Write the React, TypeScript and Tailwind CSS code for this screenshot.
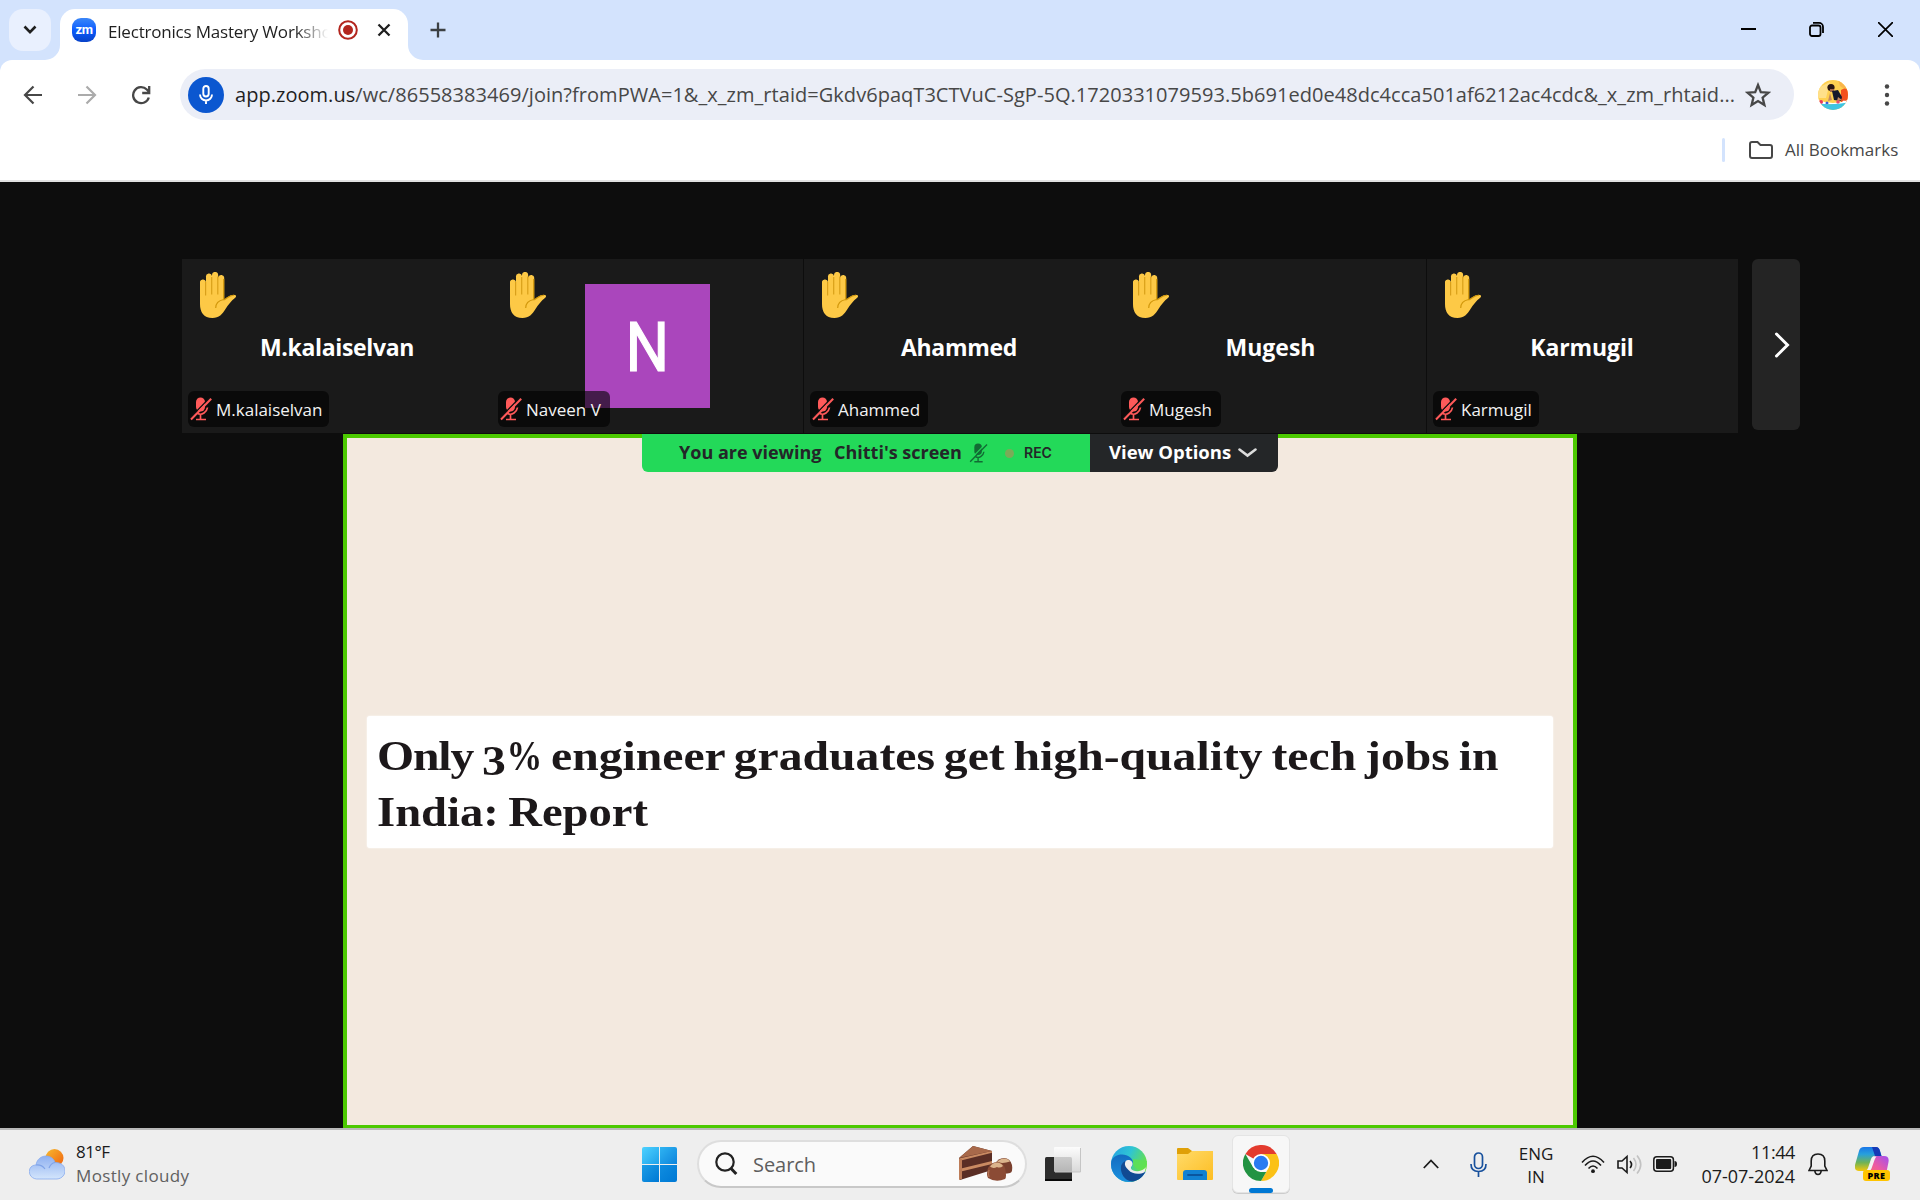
import React from "react";

const sans = "font-['Open_Sans',sans-serif]";

function Hand() {
  return (
    <svg width="37" height="47" viewBox="0 0 37 47" className="absolute left-[18px] top-[13px]">
      <path
        d="M0 11a3 3 0 0 1 6-1V5a3 3 0 0 1 6-1V3a3 3 0 0 1 6.200 0V5.500a3 3 0 0 1 6 1V27.500c2.500-.8 4-4.500 10-4.500 2 0 2.500 1.500 1 2.700C31 29 28 33 25.500 37c-3 5-6.500 9-13 9C3.500 46 0 40 0 32z"
        fill="#fdc946"
      />
      <path d="M5.600 10V23.500M11.700 5V22.500M17.800 4.500V22.500" fill="none" stroke="#d9a01a" strokeWidth="1.200" />
      <path d="M23.700 7V27.500c-5 1-8 4-8 8.500M23.700 28c3.500-1.500 4.500-4.500 10.500-5" fill="none" stroke="#d2980c" strokeWidth="1.200" />
    </svg>
  );
}

function MutedMic({ color, gap, w, h, line = 2 }: { color: string; gap: string; w: number; h: number; line?: number }) {
  return (
    <svg width={w} height={h} viewBox="0 0 22 24" className="shrink-0">
      <rect x="6" y="0.500" width="9" height="14" rx="4.500" fill={color} />
      <path d="M7 16q3.500 2.500 7 0 3-2 3.500-5.500M10.500 17.500v4.500M6 22.500h10" fill="none" stroke={color} strokeWidth="1.700" />
      <path d="M-.2 21.200 20 .5" stroke={gap} strokeWidth="1.300" />
      <path d="M1 22.500 21.200 1.800" stroke={color} strokeWidth={line} />
    </svg>
  );
}

type Person = { name: string; big: string; label: string; tile: string; picture?: boolean };

const people: Person[] = [
  { name: "M.kalaiselvan", big: "pl-px tracking-[-0.35px]", label: "w-[141px]", tile: "w-[310px] border-transparent" },
  { name: "Naveen V", big: "", label: "w-[112px]", picture: true, tile: "w-[312px] border-[#0d0d0d]" },
  { name: "Ahammed", big: "tracking-[-0.3px]", label: "w-[118px]", tile: "w-[311px] border-transparent" },
  { name: "Mugesh", big: "tracking-[0px]", label: "w-[100px]", tile: "w-[312px] border-[#0d0d0d]" },
  { name: "Karmugil", big: "tracking-[-0.1px]", label: "w-[106px]", tile: "w-[311px] border-transparent" },
];

function Tile({ p }: { p: Person }) {
  return (
    <div className={"relative flex shrink-0 items-center justify-center border-r bg-[#1a1a1a] " + p.tile}>
      <Hand />
      {p.picture ? (
        <div className="flex h-[124px] w-[125px] items-center justify-center bg-[#aa46bc] font-[Roboto,sans-serif] text-[68px] text-white">
          <span className="pt-1 scale-x-90 [-webkit-text-stroke:1.2px_white]">N</span>
        </div>
      ) : (
        <span className={"pt-0.5 text-[23px] font-bold leading-8 text-white " + p.big}>{p.name}</span>
      )}
      <div className={"absolute bottom-1.5 left-[6px] flex h-9 items-center gap-1 rounded-md bg-black/60 pl-0.5 text-[17px] text-[#f3f3f3] " + p.label}>
        <MutedMic color="#ff5a5a" gap="#101010" w={22} h={24} />
        <span className="whitespace-nowrap pt-0.5">{p.name}</span>
      </div>
    </div>
  );
}

function TabStrip() {
  return (
    <div className="flex h-[60px] bg-[#d3e3fd] pl-[9px] pt-[9px]">
      <div className="flex size-[42px] items-center justify-center rounded-[14px] bg-[#e9f0fe]">
        <svg width="14" height="10" viewBox="0 0 14 10" fill="none" stroke="#1f1f1f" strokeWidth="2.600"><path d="m1.500 1.500 5.500 5.700 5.500-5.700" /></svg>
      </div>
      <div className="relative ml-[9px] flex h-[51px] w-[348px] rounded-t-[15px] bg-white pl-3 pt-[9px]">
        <svg width="15" height="15" className="absolute -left-[15px] bottom-0"><path d="M15 0v15H0A15 15 0 0 0 15 0" fill="#fff" /></svg>
        <svg width="15" height="15" className="absolute -right-[15px] bottom-0"><path d="M0 0v15h15A15 15 0 0 1 0 0" fill="#fff" /></svg>
        <div className="flex size-6 items-center justify-center rounded-[9px] bg-linear-to-b from-[#3b86f7] via-[#0b5cff] to-[#0842c8] font-[Roboto,sans-serif] text-[13px] font-bold leading-none tracking-tight text-white">
          <span className="pb-0.5">zm</span>
        </div>
        <div className="ml-3 h-8 w-[220px] whitespace-nowrap mask-r-from-85% text-[17px] leading-[28px] tracking-[-0.2px] text-[#1f1f1f]">
          Electronics Mastery Worksho
        </div>
        <svg width="20" height="20" viewBox="0 0 20 20" className="ml-[10px] mt-[2px]">
          <circle cx="10" cy="10" r="8.800" fill="none" stroke="#b3261e" strokeWidth="2" />
          <circle cx="10" cy="10" r="5" fill="#b3261e" />
        </svg>
        <svg width="14" height="14" viewBox="0 0 14 14" className="ml-[19px] mt-[5px]" stroke="#1f1f1f" strokeWidth="2.300"><path d="m1.500 1.500 11 11m0-11-11 11" /></svg>
      </div>
      <svg width="16" height="16" viewBox="0 0 16 16" className="ml-[22px] mt-[13px]" stroke="#3c4043" strokeWidth="2.300"><path d="M8 .5v15M.5 8h15" /></svg>
      <div className="ml-auto mr-[27px] mt-[13px] flex">
        <svg width="15" height="15" className="mr-[53px]" stroke="#000" strokeWidth="2"><path d="M0 7h15" /></svg>
        <svg width="15" height="15" viewBox="0 0 15 15" className="mr-[54px]" fill="none" stroke="#000" strokeWidth="1.800"><rect x="1" y="3.500" width="10.500" height="10.500" rx="2" /><path d="M4 .9h6a4 4 0 0 1 4 4v6" /></svg>
        <svg width="15" height="15" stroke="#000" strokeWidth="1.700"><path d="m0 0 15 15M15 0 0 15" /></svg>
      </div>
    </div>
  );
}

function ProfilePicture() {
  return (
    <svg width="30" height="30" viewBox="0 0 30 30">
      <defs><clipPath id="face"><circle cx="15" cy="15" r="15" /></clipPath></defs>
      <g clipPath="url(#face)">
        <path d="M0 0h30v30H0z" fill="#ffd050" />
        <path d="M0 8 12 2l-4 16H0z" fill="#ffe08a" />
        <path d="M20 0h10v12l-8-6z" fill="#f9b64a" />
        <path d="M23 10q4-3 7 0v12h-7z" fill="#f4511e" />
        <circle cx="13" cy="7.500" r="3.600" fill="#2a1613" />
        <path d="M12 9h4v3h-4z" fill="#a6684a" />
        <path d="m14 11 6-1 4 7-1 4-7-1z" fill="#15182b" />
        <path d="m12 13 2 7-4 1z" fill="#c58860" />
        <path d="m20 17 4 3-5 1z" fill="#c58860" />
        <path d="M0 20q15 6 30 0v4H0z" fill="#fff" />
        <circle cx="3" cy="22" r="2" fill="#e9355a" /><circle cx="9" cy="23" r="1.500" fill="#3f5bd8" /><circle cx="20" cy="22" r="1.800" fill="#e94a6a" /><circle cx="26" cy="22" r="1.500" fill="#fff" />
        <path d="M0 23.500q15 2 30-1V30H0z" fill="#3ec4e2" />
      </g>
    </svg>
  );
}

function Toolbar() {
  return (
    <div className="bg-[#d3e3fd]">
      <div className="flex h-[120px] flex-col rounded-t-[12px] bg-white">
        <div className="mt-[9px] flex h-[51px] items-center">
          <svg width="20" height="20" viewBox="0 0 20 20" className="ml-[23px]" fill="none" stroke="#474747" strokeWidth="2.200"><path d="M19 10H3M10.500 1.500 2 10l8.500 8.500" /></svg>
          <svg width="20" height="20" viewBox="0 0 20 20" className="ml-[34px]" fill="none" stroke="#ababab" strokeWidth="2.200"><path d="M1 10h16M9.500 1.500 18 10l-8.500 8.500" /></svg>
          <svg width="20" height="20" viewBox="0 0 20 20" className="ml-[34px]" fill="none" stroke="#474747" strokeWidth="2.300"><path d="M17.800 12.500A8 8 0 1 1 15.800 4.500L18 6.800M18.200 1v7h-7" /></svg>
          <div className="ml-[29px] flex h-[51px] w-[1614px] items-center rounded-full bg-[#ebeef7] pl-2">
            <div className="flex size-9 items-center justify-center rounded-full bg-[#0b57d0]">
              <svg width="16" height="20" viewBox="0 0 16 20" fill="none" stroke="#fff" strokeWidth="1.900"><rect x="5.300" y="1" width="5.400" height="10.500" rx="2.700" /><path d="M2 9.500a6 6 0 0 0 12 0M8 15.500V19" /></svg>
            </div>
            <div className="ml-[11px] w-[1501px] whitespace-nowrap text-[20px] leading-[50px] tracking-[0.04px] text-[#474747]">
              <span className="text-[#1f1f1f]">app.zoom.us</span>/wc/86558383469/join?fromPWA=1&amp;_x_zm_rtaid=Gkdv6paqT3CTVuC-SgP-5Q.1720331079593.5b691ed0e48dc4cca501af6212ac4cdc&amp;_x_zm_rhtaid...
            </div>
            <svg width="26" height="26" viewBox="0 0 26 26" className="ml-[9px]" fill="none" stroke="#474747" strokeWidth="2.300"><path d="m13 3 2.800 7.100 7.600.6-5.800 4.900 1.800 7.400-6.400-4-6.400 4 1.800-7.400-5.800-4.900 7.600-.6z" /></svg>
          </div>
          <div className="ml-[24px]"><ProfilePicture /></div>
          <svg width="6" height="24" viewBox="0 0 6 24" className="ml-[36px]" fill="#474747"><circle cx="3" cy="3.500" r="2.200" /><circle cx="3" cy="12" r="2.200" /><circle cx="3" cy="20.500" r="2.200" /></svg>
        </div>
        <div className="flex flex-1 items-center pl-[1722px]">
          <div className="h-6 w-[3px] rounded-full bg-[#d3e3fd]" />
          <svg width="24" height="18" viewBox="0 0 24 18" className="ml-6" fill="none" stroke="#474747" strokeWidth="2"><path d="M1 15V3q0-2 2-2h5.500l3 3H21q2 0 2 2v9q0 2-2 2H3q-2 0-2-2z" /></svg>
          <span className="ml-3 whitespace-nowrap text-[17px] leading-6 text-[#474747]">All Bookmarks</span>
        </div>
      </div>
      <div className="h-0.5 bg-[#e1e1e1]" />
    </div>
  );
}

function Meeting() {
  return (
    <div className="h-[946px] bg-[#0d0d0d] pt-[77px]">
      <div className="ml-[182px] flex h-[174px]">
        <div className="flex w-[1556px]">{people.map((p) => <Tile key={p.name} p={p} />)}</div>
        <div className="ml-[14px] flex h-[171px] w-[48px] items-center justify-end rounded-md bg-[#242424] pr-[10px]">
          <svg width="16" height="26" viewBox="0 0 16 26" fill="none" stroke="#fff" strokeWidth="3" strokeLinecap="round"><path d="m2.500 2 11 11-11 11" /></svg>
        </div>
      </div>
      <div className="relative ml-[343px] mt-px flex h-[694px] w-[1234px] items-center justify-center border-4 border-b-[3px] border-[#4cc900] bg-[#f3e9df]">
        <div className="h-[132px] w-[1186px] rounded-[3px] bg-white pl-[10px] pt-3 font-['Liberation_Serif',serif] text-[42px] font-bold leading-[56px] text-[#1c181a] shadow-[0_0_2px_#fff]">
          <div className="w-max origin-left scale-x-[1.135] whitespace-nowrap [word-spacing:-2.7px]">
            <span className="tracking-[-1px]">Only</span> <span className="relative top-[5px]">3</span>
            <span className="-mr-[10px] inline-block origin-left scale-x-75">%</span> engineer graduates get high-quality tech jobs in
          </div>
          <div className="w-max origin-left scale-x-[1.11] whitespace-nowrap [word-spacing:-2px]">India: Report</div>
        </div>
        <div className="absolute -top-1 left-[295px] flex h-[38px] w-[636px] overflow-hidden rounded-b-md text-[18px] font-bold leading-9">
          <div className="flex w-[448px] items-center bg-[#23d959] pl-[37px] text-[#232628]">
            <span className="w-[155px] whitespace-nowrap pb-0.5">You are viewing</span>
            <span className="w-[135px] whitespace-nowrap pb-0.5">Chitti&apos;s screen</span>
            <MutedMic color="#126b34" gap="#23d959" w={19} h={20} line={1.6} />
            <div className="ml-[17px] size-[9px] rounded-full bg-[#7bab58]" />
            <span className="ml-[10px] font-[Inter,sans-serif] text-[14px] font-semibold">REC</span>
          </div>
          <div className="flex flex-1 items-center bg-[#242628] pl-[19px] text-[18.500px] text-white">
            <span className="w-[129px] whitespace-nowrap pb-0.5">View Options</span>
            <svg width="19" height="10" viewBox="0 0 19 10" fill="none" stroke="#dcdcdc" strokeWidth="2.600" strokeLinecap="round"><path d="m1.500 1.500 8 6 8-6" /></svg>
          </div>
        </div>
      </div>
    </div>
  );
}

function Weather() {
  return (
    <svg width="36" height="31" viewBox="0 0 36 31">
      <defs>
        <linearGradient id="sun" x1="0" y1="0" x2="1" y2="1"><stop offset="0" stopColor="#f7bb2f" /><stop offset="1" stopColor="#f0600e" /></linearGradient>
        <linearGradient id="cloud" x1="0" y1="0" x2="0" y2="1"><stop offset="0" stopColor="#8fb0f0" /><stop offset="1" stopColor="#d3e5fc" /></linearGradient>
      </defs>
      <circle cx="25.500" cy="9" r="9" fill="url(#sun)" />
      <path d="M7.500 30C-2 29-2 16 7 16 9 4 24 5 26 13.500 39 13 39 29 28 30z" fill="url(#cloud)" stroke="#86a9ed" strokeWidth=".8" />
      <path d="M7 16q6-.5 9 4M20 19q2-5 6-5.500" fill="none" stroke="#7fa3e8" strokeWidth="1.200" />
    </svg>
  );
}

function Cake() {
  return (
    <svg width="54" height="36" viewBox="0 0 54 36">
      <path d="M0 12 14 0l19 5v19L1 34z" fill="#5a2e25" />
      <path d="M0 12 14 0l19 5z" fill="#a8694a" />
      <path d="M0 12.500 33 5v1.800L0 15zM0 23l33-8v3L0 26z" fill="#c98a62" />
      <path d="M0 13h3v20l-3 1z" fill="#bd7c58" />
      <path d="M36 18q3-6 9-6t8 7q1 7-2 8-8 2-15-2z" fill="#7a402e" />
      <path d="M38 16q3-3.500 7-3.500t6 3q-7 2.500-13 .5" fill="#dcb48c" />
      <path d="M29 22q3-6 9-6t8 6q2 9 0 11-9 4-17-1-2-3 0-10z" fill="#8b4b35" />
      <path d="M31 20.500q3-4 7-4t6 3.500q-3 2.500-6 1-4 2-7-.5" fill="#dcb48c" />
      <path d="M30 24q-1 4 0 7" stroke="#bd7c58" fill="none" />
    </svg>
  );
}

function Edge() {
  return (
    <svg width="36" height="36" viewBox="0 0 36 36">
      <defs>
        <linearGradient id="edgeTop" x1="0" y1="0" x2="1" y2=".5"><stop offset="0" stopColor="#249fe5" /><stop offset=".5" stopColor="#2fc4d4" /><stop offset="1" stopColor="#6ce43c" /></linearGradient>
        <linearGradient id="edgeLow" x1="0" y1="0" x2="0" y2="1"><stop offset="0" stopColor="#136bc0" /><stop offset="1" stopColor="#1b91df" /></linearGradient>
      </defs>
      <circle cx="18" cy="18" r="18" fill="url(#edgeTop)" />
      <path d="M0 18C0 11 6 8.500 11 8.500c6 0 11 4 11 8 0 3-2 4-2 6s4 4.500 8 4.500c3 0 5-1 7-1.500Q29 36 18 36A18 18 0 0 1 0 18z" fill="url(#edgeLow)" />
      <path d="M14 15q-5 3-4 9c1 6 5 11 11 11.500 6-.5 10-4 13-9 0-1-.5-1-1.500-.5-5 2-12 1-15-4-1-2-1.500-4-3.500-7z" fill="#114a93" />
      <path d="M17 14c3 0 5 2 4.500 4.500-.5 2-2 2.500-1.500 4 1 2 4 3 7 2.700 3-.2 6-1.500 8-4.200l-1.500 5.200C28 29 21 28 17.500 24c-3-3-4-5-3.500-7 .3-1.800 1.500-3 3-3z" fill="#eee" />
      <path d="M22 17c0 6 7 8 13 4q1-3 1-6l-14-2z" fill="#5fe052" opacity=".85" />
    </svg>
  );
}

function Chrome() {
  return (
    <svg width="36" height="36" viewBox="0 0 36 36">
      <path d="M18 18 2.400 9A18 18 0 0 1 33.600 9z" fill="#e33b2e" />
      <path d="M18 9h15.600A18 18 0 0 1 18 36l7.800-13.500z" fill="#fbc116" />
      <path d="M2.400 9l7.800 13.500L18 27h5.200L18 36A18 18 0 0 1 2.400 9z" fill="#229342" />
      <circle cx="18" cy="18" r="9" fill="#fff" />
      <circle cx="18" cy="18" r="7.200" fill="#2b7bf1" />
    </svg>
  );
}

function Copilot() {
  return (
    <div className="relative ml-[27px] h-[34px] w-9">
      <svg width="34" height="31" viewBox="0 0 34 31">
        <defs>
          <linearGradient id="cpA" x1="0" y1="0" x2="0" y2="1"><stop offset="0" stopColor="#1976e8" /><stop offset=".3" stopColor="#27a0dc" /><stop offset=".65" stopColor="#6fb356" /><stop offset="1" stopColor="#f5c80a" /></linearGradient>
          <linearGradient id="cpB" x1="1" y1="0" x2="0" y2="1"><stop offset="0" stopColor="#a14ff0" /><stop offset=".5" stopColor="#ee5aa0" /><stop offset="1" stopColor="#fb7c52" /></linearGradient>
        </defs>
        <path d="M9 0h12q3 0 4 4l1.500 5H20q-3 0-4 3l-3 9q-1 3-4 3H4q-5 0-4-6L4 4q1-4 5-4z" fill="url(#cpA)" />
        <path d="M17 0h4q3 0 4 4l1.500 5H20z" fill="#1539b6" />
        <path d="M21 9h8q5.500 0 4.500 6l-2 10q-1 5-5 5H14q-3 0-4-3l-1-3q4 0 5-2l3-9q1-4 4-4z" fill="url(#cpB)" />
        <path d="m18.500 9.500h3q-1.500 1.500-2 3.500l-3 8.500q-.5 2-2.500 2h-3q2-.5 3-3l2.500-8q.5-2 2-3z" fill="#f3f3f3" />
      </svg>
      <div className="absolute bottom-0 right-[1px] flex h-[11px] w-[27px] items-center justify-center rounded-[3px] bg-[#ffc400] text-[9px] font-extrabold leading-none tracking-[0.4px] text-black">PRE</div>
    </div>
  );
}

function Taskbar() {
  return (
    <div className="flex h-[72px] items-center border-t-2 border-[#b9b9b9] bg-[#eee] pb-0.5 text-[#1b1b1b]">
      <div className="flex w-[642px] items-center pl-[29px]">
        <Weather />
        <div className="ml-[11px] text-[17px] leading-6">
          <div className="tracking-[-0.5px]">81°F</div>
          <div className="tracking-[0.35px] text-[#606060]">Mostly cloudy</div>
        </div>
      </div>
      <div className="grid size-[35px] grid-cols-2 gap-px overflow-hidden rounded-[2px]">
        <div className="bg-linear-to-br from-[#4dd2ff] to-[#1ba1ea]" />
        <div className="bg-linear-to-br from-[#2fb4f2] to-[#0c84dc]" />
        <div className="bg-linear-to-br from-[#1b9de6] to-[#0078d4]" />
        <div className="bg-linear-to-br from-[#0f8de0] to-[#0078d4]" />
      </div>
      <div className="ml-5 flex h-12 w-[330px] items-center rounded-full border-2 border-[#dedede] border-b-[#c8c8c8] bg-[#fafafa] pl-4">
        <svg width="23" height="24" viewBox="0 0 23 24" fill="none" stroke="#222" strokeWidth="2.200"><circle cx="10" cy="10" r="8.700" /><path d="m15.800 16.300 5.500 5.700" strokeWidth="3" /></svg>
        <span className="ml-[15px] w-[206px] pt-0.5 text-[20px] tracking-[-0.05px] text-[#5e5e5e]">Search</span>
        <Cake />
      </div>
      <svg width="36" height="35" viewBox="0 0 36 35" className="ml-[18px]">
        <defs><linearGradient id="pane" x1="0" y1="0" x2="0" y2="1"><stop offset="0" stopColor="#fff" /><stop offset="1" stopColor="#d4d4d4" /></linearGradient></defs>
        <rect y="10" width="27" height="24" rx="1.500" fill="#2c2c2c" /><path d="M0 32h27v2H0z" fill="#080808" />
        <rect x="9" y="0" width="26.500" height="25" rx="1" fill="url(#pane)" opacity=".82" /><path d="M10 25h25.500V1" fill="none" stroke="#c5c5c5" />
      </svg>
      <div className="ml-[30px]"><Edge /></div>
      <svg width="36" height="34" viewBox="0 0 36 34" className="ml-[30px]">
        <defs><linearGradient id="fold" x1="0" y1="0" x2="1" y2="1"><stop offset="0" stopColor="#ffdb6a" /><stop offset="1" stopColor="#fdbd22" /></linearGradient></defs>
        <path d="M0 2q0-1 1-1h10l4 3h20q1 0 1 1v6H0z" fill="#dfa008" />
        <path d="M0 7h11l4-3h21v28q0 1-1 1H1q-1 0-1-1z" fill="url(#fold)" />
        <path d="M6 33V26q0-3 3-3h18q3 0 3 3v7z" fill="#1181d2" /><path d="M11 28h14" stroke="#0a559e" strokeWidth="1.800" strokeLinecap="round" />
      </svg>
      <div className="relative ml-[19px] flex size-[58px] items-center justify-center rounded-md border border-[#e4e4e4] bg-[#f7f7f7] shadow-[0_1px_0_#ccc]">
        <div className="pb-0.5"><Chrome /></div>
        <div className="absolute -bottom-px left-4 h-[5px] w-6 rounded-full bg-[#0078d4]" />
      </div>
      <svg width="16" height="10" viewBox="0 0 16 10" className="ml-[133px]" fill="none" stroke="#1b1b1b" strokeWidth="1.800"><path d="m.8 9 7.200-7.500L15.200 9" /></svg>
      <svg width="17" height="25" viewBox="0 0 17 25" className="ml-[31px]" fill="none" stroke="#17509c" strokeWidth="1.700"><rect x="4.500" y="1" width="8" height="15.500" rx="4" /><path d="M1 12q0 7.500 7.500 7.500T16 12M8.500 19.500V25" /></svg>
      <div className="ml-[30px] flex w-[38px] flex-col items-center pt-0.5 text-[17px] leading-[23px]"><span>ENG</span><span>IN</span></div>
      <svg width="24" height="19" viewBox="0 0 24 19" className="ml-[26px]" fill="none" stroke="#1b1b1b" strokeWidth="1.600"><path d="M1 7.500q11-12.500 22 0M4 10.500q8-9 16 0M7.500 13.500q4.500-5 9 0" /><circle cx="12" cy="16.200" r="1.900" fill="#1b1b1b" stroke="none" /></svg>
      <svg width="25" height="21" viewBox="0 0 25 21" className="ml-[12px]" fill="none" stroke="#1b1b1b" strokeWidth="1.600"><path d="M1 7v7h4l5 4.500v-16L5 7zM13 7q3 3.500 0 7" /><path d="M16.500 4q5 6.500 0 13M20 1.500q7.500 9 0 18" stroke="#c2c2c2" /></svg>
      <svg width="24" height="16" viewBox="0 0 24 16" className="ml-[11px]"><rect x=".8" y=".8" width="19.600" height="14.400" rx="3" fill="none" stroke="#1b1b1b" strokeWidth="1.500" /><rect x="3" y="3" width="15.200" height="10" rx="1" fill="#1b1b1b" /><path d="M21.500 5q2.500 0 2.500 3t-2.500 3z" fill="#1b1b1b" /></svg>
      <div className="w-[118px] pb-px text-right text-[18px] leading-6"><div className="tracking-[-0.4px]">11:44</div><div className="tracking-[-0.05px]">07-07-2024</div></div>
      <svg width="20" height="23" viewBox="0 0 20 23" className="ml-[13px]" fill="none" stroke="#1b1b1b" strokeWidth="1.600"><path d="M1 17.500 3.200 13V8q0-7 6.800-7t6.800 7v5l2.200 4.500zM6.800 18q.5 3.500 3.200 3.500t3.200-3.500" /></svg>
      <Copilot />
    </div>
  );
}

export default function App() {
  return (
    <div className={"flex h-[1200px] w-[1920px] flex-col overflow-hidden bg-[#0d0d0d] " + sans}>
      <TabStrip />
      <Toolbar />
      <Meeting />
      <Taskbar />
    </div>
  );
}
